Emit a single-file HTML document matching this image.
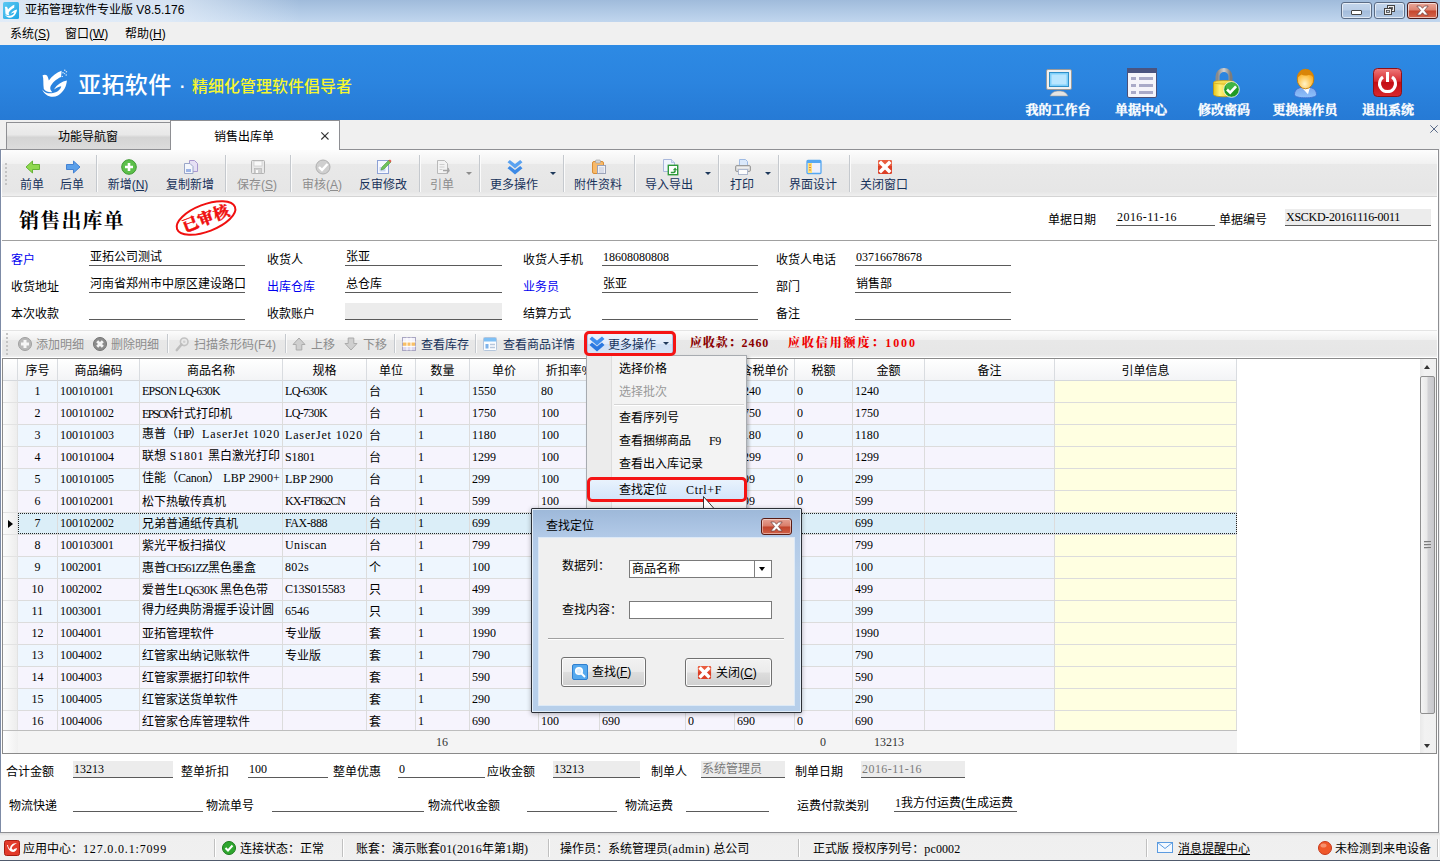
<!DOCTYPE html><html lang="zh-CN"><head><meta charset="utf-8"><title>亚拓管理软件专业版</title><style>
*{box-sizing:border-box;margin:0;padding:0}
html,body{width:1440px;height:861px;overflow:hidden;background:#f0f0f0}
body{position:relative;font:12px/14px 'Liberation Sans','Noto Sans CJK SC',sans-serif;color:#000}
.a{position:absolute;white-space:nowrap}
.m{font-family:'Liberation Serif','Noto Serif CJK SC',serif;font-size:12px}
.sf{font-family:'Liberation Serif','Noto Serif CJK SC',serif}
svg{position:absolute;overflow:visible}
#title{left:0;top:0;width:1440px;height:22px;background:linear-gradient(#a0bbdb,#b0c9e5 50%,#c1d6ee)}
#title:after{content:"";position:absolute;left:0;top:0;width:300px;height:22px;background:linear-gradient(to right,rgba(236,243,251,.75),rgba(236,243,251,.7) 55%,rgba(236,243,251,0))}
#menu{left:0;top:22px;width:1440px;height:23px;background:#f0f0f0}
#banner{left:0;top:45px;width:1440px;height:75px;background:linear-gradient(#2d8ae4,#2b84df 50%,#267ad5)}
.cap{top:2px;height:17px;width:31px;border:1px solid #5b6c85;border-radius:3px;box-shadow:inset 0 0 0 1px rgba(255,255,255,.6);background:linear-gradient(#c4d6ec 0,#b9cde6 48%,#a3bcdb 52%,#b3c9e4)}
.bl{color:#fff;font:bold 13px/14px 'Liberation Serif','Noto Serif CJK SC',serif;-webkit-text-stroke:.35px #fff;top:103px;text-align:center;transform:translateX(-50%)}
.tb{color:#17325a;top:178px;transform:translateX(-50%);text-align:center}
.tb.g{color:#8d8d8d}
.tsep{top:155px;width:2px;height:37px;border-left:1px solid #c5c9ce;border-right:1px solid #fbfbfb}
.dd{width:0;height:0;border:3px solid transparent;border-top:3px solid #333;border-bottom:0}

.fv{border-bottom:1px solid #5a5a5a;height:17px;font-size:12px;line-height:16px;padding-left:1px}
.dt{top:338px;color:#17325a;font-size:12px;line-height:14px}
.dt.g{color:#8d8d8d}
.dsep{top:334px;width:2px;height:19px;border-left:1px solid #c5c9ce;border-right:1px solid #fbfbfb}
.gh{top:359px;height:22px;line-height:25px;overflow:hidden;text-align:center;font-size:12px;background:linear-gradient(#fff,#f3f4f6);border-right:1px solid #d9dce0;border-bottom:1px solid #d5d8dc}
.c{height:22px;line-height:23px;border-right:1px solid #dcdcdc;border-bottom:1px solid #dcdcdc;padding-left:2px;overflow:hidden;font-size:12px}
.c.m{line-height:21px}
.st{top:842px;font-size:12px;line-height:14px}
.ssep{top:839px;width:2px;height:18px;border-left:1px solid #c0c0c0;border-right:1px solid #fff}
.mi{left:619px;font-size:12px;line-height:14px}
.btn{border:1px solid #707070;border-radius:3px;box-shadow:inset 0 0 0 1px #fcfcfc;background:linear-gradient(#f2f2f2 0,#ebebeb 48%,#dddddd 52%,#cfcfcf)}
</style></head><body>
<div class="a" id="title"></div>
<svg style="left:3px;top:2px" width="16" height="17" viewBox="0 0 16 17"><defs><linearGradient id="tg" x1="0" y1="0" x2="1" y2="1"><stop offset="0" stop-color="#5cc8f2"/><stop offset="1" stop-color="#1ea6e4"/></linearGradient></defs><rect x="0" y="0" width="16" height="17" rx="1.500" fill="url(#tg)"/><g transform="translate(-1.400,-1.700) scale(.5)" fill="#fff"><path d="M6.600 13.300C8 12.500 10 12.500 11 13.500C12 15 12.500 17 12.800 18.600C16 14 21 10.500 25.600 8.800L25.100 14.900C20 17 16 21 14.500 24.500C13.800 26.500 14.500 28.500 16.300 30.200C13 30.500 9.500 29.500 7.800 27C7 22 7.800 17 6.600 13.300Z"/><path d="M6.300 27.500C8.500 31 13 32 17 31C22 30 25 27 25.200 24.200C22.500 24.500 20 26 18 27.600C21 22.500 26 19.500 30.900 18.600C30.500 24 28 30 22 33.500C16 36.500 8.500 34 6.300 27.500Z"/></g></svg>
<div class="a" style="left:25px;top:2px;font:12px/16px 'Liberation Sans','Noto Sans CJK SC',sans-serif">亚拓管理软件专业版 V8.5.176</div>
<div class="a cap" style="left:1341px"></div>
<div class="a cap" style="left:1374px"></div>
<div class="a cap" style="left:1407px;border-color:#4a1a1a;background:linear-gradient(#e9a99b 0,#dc8270 48%,#c5452c 52%,#d4674f)"></div>
<div class="a" style="left:1351px;top:10px;width:11px;height:5px;border:1px solid #444;border-radius:1px;background:#fff"></div>
<svg style="left:1383px;top:4px" width="13" height="12" viewBox="0 0 13 12"><rect x="4.5" y="1.5" width="7" height="6" fill="#eee" stroke="#444"/><rect x="6.5" y="3.5" width="3" height="2" fill="#c4d4e8" stroke="#444" stroke-width=".8"/><rect x="1.5" y="4.5" width="7" height="6" fill="#eee" stroke="#444"/><rect x="3.5" y="6.5" width="3" height="2" fill="#c4d4e8" stroke="#444" stroke-width=".8"/></svg>
<svg style="left:1416px;top:5px" width="13" height="11" viewBox="0 0 13 11"><path d="M.8 1h3.700l2 2.300 2-2.300h3.700l-3.800 4.500 3.800 4.500h-3.700l-2-2.300-2 2.300h-3.700l3.800-4.500z" fill="#fff" stroke="#6a3a3a" stroke-width=".7"/></svg>
<div class="a" id="menu"></div>
<div class="a" style="left:10px;top:26px;font:12px/16px 'Liberation Sans','Noto Sans CJK SC',sans-serif">系统(<u>S</u>)</div>
<div class="a" style="left:65px;top:26px;font:12px/16px 'Liberation Sans','Noto Sans CJK SC',sans-serif">窗口(<u>W</u>)</div>
<div class="a" style="left:125px;top:26px;font:12px/16px 'Liberation Sans','Noto Sans CJK SC',sans-serif">帮助(<u>H</u>)</div>
<div class="a" id="banner"></div>
<svg style="left:36px;top:62px" width="40" height="40" viewBox="0 0 40 40"><g fill="#fff"><path d="M6.600 13.300C8 12.500 10 12.500 11 13.500C12 15 12.500 17 12.800 18.600C16 14 21 10.500 25.600 8.800L25.100 14.900C20 17 16 21 14.500 24.500C13.800 26.500 14.500 28.500 16.300 30.200C13 30.500 9.500 29.500 7.800 27C7 22 7.800 17 6.600 13.300Z"/><path d="M6.300 27.500C8.500 31 13 32 17 31C22 30 25 27 25.200 24.200C22.500 24.500 20 26 18 27.600C21 22.500 26 19.500 30.900 18.600C30.500 24 28 30 22 33.500C16 36.500 8.500 34 6.300 27.500Z"/><g opacity=".8"><circle cx="28.800" cy="8.200" r=".8"/><circle cx="30.400" cy="9.700" r=".8"/><circle cx="27" cy="10.800" r=".8"/><circle cx="28.600" cy="11.600" r=".7"/><circle cx="30.200" cy="13" r=".8"/><circle cx="26.300" cy="14.400" r=".7"/></g></g></svg>
<div class="a" style="left:78px;top:70px;color:#fff;font:500 23px/30px 'Liberation Sans','Noto Sans CJK SC',sans-serif;letter-spacing:0.4px">亚拓软件</div>
<div class="a" style="left:180px;top:75px;color:#fff;font:bold 16px/24px 'Liberation Sans','Noto Sans CJK SC',sans-serif">·</div>
<div class="a" style="left:192px;top:75px;color:#f6f62e;font:500 16px/24px 'Liberation Sans','Noto Sans CJK SC',sans-serif">精细化管理软件倡导者</div>
<svg style="left:1046px;top:69px" width="26" height="28" viewBox="0 0 26 28"><rect x=".5" y=".5" width="25" height="20" rx="1.5" fill="#f0f0f0" stroke="#9a9a9a"/><rect x="3" y="3" width="20" height="15" fill="#2f8fc8"/><rect x="4" y="4" width="18" height="13" fill="#7fd0fa"/><rect x="5.500" y="5.500" width="15" height="10" fill="#b9e6ff"/><path d="M4 27c2-4 5-5 9-5s7 1 9 5z" fill="#e4e4e4" stroke="#9a9a9a" stroke-width=".6"/></svg>
<svg style="left:1127px;top:68px" width="30" height="30" viewBox="0 0 30 30"><rect x=".5" y=".5" width="29" height="29" rx="1.5" fill="#f4f4fa" stroke="#4a5078"/><rect x="0" y="0" width="30" height="5" fill="#4a5480"/><g fill="#a9aac8"><rect x="4" y="9" width="5" height="3"/><rect x="12" y="9" width="14" height="3"/><rect x="4" y="16" width="5" height="3"/><rect x="12" y="16" width="14" height="3"/><rect x="4" y="23" width="5" height="3"/><rect x="12" y="23" width="14" height="3"/></g></svg>
<svg style="left:1213px;top:68px" width="28" height="30" viewBox="0 0 28 30"><defs><linearGradient id="lk" x1="0" x2="1"><stop offset="0" stop-color="#e8c418"/><stop offset=".3" stop-color="#fff27a"/><stop offset="1" stop-color="#e2b80e"/></linearGradient><linearGradient id="sh" x1="0" x2="1"><stop offset="0" stop-color="#8a8a8a"/><stop offset=".5" stop-color="#d2d2d2"/><stop offset="1" stop-color="#7c7c7c"/></linearGradient></defs><path d="M4.500 14V8.500a6.500 6.500 0 0 1 13 0V14" fill="none" stroke="url(#sh)" stroke-width="4"/><path d="M.5 14.500c0-2 21-2 21 0v12c0 3-21 3-21 0z" fill="url(#lk)" stroke="#c49a10" stroke-width=".8"/><ellipse cx="11" cy="14.300" rx="10.300" ry="1.800" fill="#f4dc50" stroke="#c49a10" stroke-width=".6"/><circle cx="18.500" cy="21.500" r="7.800" fill="#1f9a24" stroke="#fff" stroke-width=".8"/><ellipse cx="18.500" cy="18.500" rx="6" ry="4" fill="#58c85a" opacity=".6"/><path d="M14 21.500l3.200 3.200 5.800-6.400" fill="none" stroke="#fff" stroke-width="2.600"/></svg>
<svg style="left:1293px;top:68px" width="25" height="30" viewBox="0 0 25 30"><defs><linearGradient id="ub" x1="0" y1="0" x2="0" y2="1"><stop offset="0" stop-color="#7aa6ec"/><stop offset="1" stop-color="#8fc2fb"/></linearGradient><radialGradient id="uf" cx=".45" cy=".75" r=".7"><stop offset="0" stop-color="#fff3c8"/><stop offset=".6" stop-color="#ffc24a"/><stop offset="1" stop-color="#f0980e"/></radialGradient></defs><path d="M1.500 26.500C1.500 21 6 19 12.500 19S23.500 21 23.500 26.500C23.500 29 18 29.800 12.500 29.800S1.500 29 1.500 26.500z" fill="url(#ub)" stroke="#3f6fd0" stroke-width=".9"/><path d="M8.500 19.200l6.500 7 2-7z" fill="#fff"/><ellipse cx="12.500" cy="11" rx="8.300" ry="9.800" fill="url(#uf)" stroke="#c07a08" stroke-width=".9"/><path d="M4.300 10.500C4 4.500 8 1.200 12.500 1.200S21 4.500 20.700 10.500C20 8 17.500 6.800 15 7.200C12 7.700 10 7.500 8.500 6.500C7 7.500 5 8.800 4.300 10.500z" fill="#d98508"/></svg>
<svg style="left:1373px;top:68px" width="29" height="29" viewBox="0 0 29 29"><defs><linearGradient id="pw" x1="0" y1="0" x2="0" y2="1"><stop offset="0" stop-color="#ee7a7a"/><stop offset=".45" stop-color="#d62a30"/><stop offset=".5" stop-color="#c40d14"/><stop offset="1" stop-color="#d8282c"/></linearGradient></defs><rect x=".5" y=".5" width="28" height="28" rx="4" fill="url(#pw)" stroke="#8f1016"/><path d="M10 9a8 8 0 1 0 9 0" fill="none" stroke="#fff" stroke-width="3"/><path d="M14.500 4v10" stroke="#fff" stroke-width="3"/></svg>
<div class="a bl" style="left:1058px">我的工作台</div>
<div class="a bl" style="left:1141px">单据中心</div>
<div class="a bl" style="left:1224px">修改密码</div>
<div class="a bl" style="left:1305px">更换操作员</div>
<div class="a bl" style="left:1388px">退出系统</div>
<div class="a" style="left:6px;top:122px;width:165px;height:28px;border:1px solid #8e8f93;background:linear-gradient(#f0f0f0 0,#e8e8e8 45%,#d4d4d4 55%,#dcdcdc)"></div>
<div class="a" style="left:88px;top:130px;transform:translateX(-50%);font-size:12px">功能导航窗</div>
<svg style="left:1430px;top:125px" width="8" height="8" viewBox="0 0 8 8"><path d="M.3 .3l7.400 7.400M7.700 .3l-7.400 7.400" stroke="#5b6b88" stroke-width="1"/></svg>
<div class="a" style="left:0;top:149px;width:1439px;height:684px;border:1px solid #8e8f93;border-left-color:#7d8ba6;background:#fff"></div>
<div class="a" style="left:170px;top:120px;width:170px;height:30px;border:1px solid #8e8f93;border-bottom:0;background:#fff"></div>
<div class="a" style="left:244px;top:130px;transform:translateX(-50%);font-size:12px">销售出库单</div>
<svg style="left:321px;top:132px" width="8" height="8" viewBox="0 0 8 8"><path d="M.3 .3l7.200 7.200M7.500 .3l-7.200 7.200" stroke="#333" stroke-width="1.100"/></svg>
<div class="a" style="left:2px;top:150px;width:1435px;height:47px;background:linear-gradient(#fdfdfd 0,#f1f1f1 30%,#e9e9e9 31%,#e6e6e6 90%,#efefef);border-bottom:1px solid #d4d4d4"></div>
<div class="a" style="left:5px;top:163px;width:2px;height:2px;background:#c3c3c3"></div>
<div class="a" style="left:5px;top:167px;width:2px;height:2px;background:#c3c3c3"></div>
<div class="a" style="left:5px;top:171px;width:2px;height:2px;background:#c3c3c3"></div>
<div class="a" style="left:5px;top:175px;width:2px;height:2px;background:#c3c3c3"></div>
<div class="a" style="left:5px;top:179px;width:2px;height:2px;background:#c3c3c3"></div>
<div class="a" style="left:5px;top:183px;width:2px;height:2px;background:#c3c3c3"></div>
<svg style="left:25px;top:159px" width="16" height="16" viewBox="0 0 16 16"><path d="M1 8l6.500-6v3.500h7v5h-7v3.500z" fill="#8fd94f" stroke="#5cad2a" stroke-width=".9"/></svg>
<div class="a tb" style="left:32px">前单</div>
<svg style="left:65px;top:159px" width="16" height="16" viewBox="0 0 16 16"><path d="M15 8l-6.500-6v3.500h-7v5h7v3.500z" fill="#5ba0ea" stroke="#3a7bd0" stroke-width=".9"/></svg>
<div class="a tb" style="left:72px">后单</div>
<svg style="left:121px;top:159px" width="16" height="16" viewBox="0 0 16 16"><circle cx="8" cy="8" r="7.300" fill="#5cc04a" stroke="#3f9a32"/><path d="M8 4v8M4 8h8" stroke="#fff" stroke-width="2.600"/></svg>
<div class="a tb" style="left:128px">新增(<u>N</u>)</div>
<svg style="left:183px;top:159px" width="16" height="16" viewBox="0 0 16 16"><path d="M6.500 1.500h5l3 3v8h-8z" fill="#e6e0f4" stroke="#a898cf"/><path d="M1.500 4.500h5.500l3 3v7h-8.500z" fill="#f4f6fb" stroke="#9aa6c8"/><rect x="3" y="10" width="5" height="3" fill="#9db4e6"/></svg>
<div class="a tb" style="left:190px">复制新增</div>
<svg style="left:250px;top:159px" width="16" height="16" viewBox="0 0 16 16"><rect x="1.500" y="1.500" width="13" height="13" rx="1" fill="#e9e9e9" stroke="#b1b1b1"/><rect x="4" y="2" width="8" height="5" fill="#fafafa" stroke="#c2c2c2" stroke-width=".6"/><rect x="4.500" y="9.500" width="7" height="5" fill="#d0d0d0" stroke="#b1b1b1" stroke-width=".6"/><rect x="6" y="11" width="2" height="3" fill="#fafafa"/></svg>
<div class="a tb g" style="left:257px">保存(<u>S</u>)</div>
<svg style="left:315px;top:159px" width="16" height="16" viewBox="0 0 16 16"><circle cx="8" cy="8" r="7" fill="#cfcfcf" stroke="#b0b0b0"/><path d="M4 8l3 3 5.500-6" fill="none" stroke="#fff" stroke-width="2.400"/></svg>
<div class="a tb g" style="left:322px">审核(<u>A</u>)</div>
<svg style="left:376px;top:159px" width="16" height="16" viewBox="0 0 16 16"><rect x="1.500" y="1.500" width="11" height="13" fill="#f6f8ff" stroke="#8ea2d6"/><rect x="3.500" y="8" width="6" height="4.500" fill="#c9d5f1"/><path d="M5 11l1-3 7-7 2 2-7 7z" fill="#6fc25a" stroke="#4c9a3a" stroke-width=".6"/><path d="M12.500 1.500l1.500-1 1.500 1.500-1 1.500z" fill="#e0564a"/></svg>
<div class="a tb" style="left:383px">反审修改</div>
<svg style="left:435px;top:159px" width="16" height="16" viewBox="0 0 16 16"><path d="M2.500 1.500h7l3 3v10h-10z" fill="#f3f3f3" stroke="#b9b9b9"/><path d="M4.500 5.500h5M4.500 8h5M4.500 10.500h3" stroke="#cfcfcf"/><path d="M8 11.500h6l-1-2.500M14 11.500l-2 2.500" fill="none" stroke="#a5a5a5" stroke-width="1.300"/></svg>
<div class="a tb g" style="left:442px">引单</div>
<svg style="left:507px;top:159px" width="16" height="16" viewBox="0 0 16 16"><path d="M.5 3.200l2.300-2.300 5.200 4 5.200-4 2.300 2.300-7.500 6.300z" fill="#5aa2f0"/><path d="M.5 9.200l2.300-2.300 5.200 4 5.200-4 2.300 2.300-7.500 6.300z" fill="#3d8ae6"/></svg>
<div class="a tb" style="left:514px">更多操作</div>
<svg style="left:591px;top:159px" width="16" height="16" viewBox="0 0 16 16"><rect x="1.500" y="2.500" width="11" height="12" rx="1.500" fill="#f7b96a" stroke="#d98e38"/><rect x="4.500" y="1" width="5" height="3" rx="1" fill="#d7d7d7" stroke="#9a9a9a" stroke-width=".6"/><rect x="6.500" y="6.500" width="8" height="8" fill="#f0f2f8" stroke="#9aa2b8"/><path d="M8 9h5M8 11h5M8 13h5" stroke="#b5bcd0" stroke-width=".8"/></svg>
<div class="a tb" style="left:598px">附件资料</div>
<svg style="left:662px;top:159px" width="16" height="16" viewBox="0 0 16 16"><path d="M1.500 .5h8l3 3v9h-11z" fill="#eef3fd" stroke="#a9b8dc"/><path d="M9.500 .5v3h3" fill="#dfe7f8" stroke="#a9b8dc" stroke-width=".7"/><rect x="6.300" y="6.300" width="9.400" height="9.400" fill="#fff" stroke="#2e9a3a" stroke-width="1.400"/><path d="M8.800 13.500h2.700c1.200 0 1.600-.8 1.600-2.200" fill="none" stroke="#2e9a3a" stroke-width="1.700"/><path d="M10.800 11.300l2.300-2.800 2.200 2.800z" fill="#2e9a3a"/></svg>
<div class="a tb" style="left:669px">导入导出</div>
<svg style="left:735px;top:159px" width="16" height="16" viewBox="0 0 16 16"><path d="M4.500 .5h6l2 2v5h-8z" fill="#dbe9fb" stroke="#9fbbe4"/><rect x=".5" y="6.500" width="15" height="6" rx="1.500" fill="#d6d6d6" stroke="#9d9d9d"/><rect x="3.500" y="10.500" width="9" height="5" fill="#fcfcfc" stroke="#aeb9cf"/><rect x="2" y="8" width="12" height="1.500" fill="#efefef"/></svg>
<div class="a tb" style="left:742px">打印</div>
<svg style="left:806px;top:159px" width="16" height="16" viewBox="0 0 16 16"><rect x="1" y="1.500" width="14" height="13" rx="1" fill="#eef0fb" stroke="#56a7f0" stroke-width="1.300"/><rect x="1" y="1.500" width="14" height="2.500" fill="#56a7f0"/><rect x="2" y="4" width="4" height="10" fill="#ffe27a"/><path d="M3 6h2M3 8.500h2M3 11h2" stroke="#e0813a" stroke-width="1.200"/></svg>
<div class="a tb" style="left:813px">界面设计</div>
<svg style="left:877px;top:159px" width="16" height="16" viewBox="0 0 16 16"><rect x="1" y="1" width="14" height="14" rx="1.500" fill="#dc3f26"/><path d="M1 2.500a1.500 1.500 0 0 1 1.500-1.500h11a1.500 1.500 0 0 1 1.500 1.500v4.500h-14z" fill="#ee6a48" opacity=".7"/><path d="M4 4l8 8M12 4l-8 8" stroke="#fff" stroke-width="3.600" stroke-linecap="square"/></svg>
<div class="a tb" style="left:884px">关闭窗口</div>
<div class="a tsep" style="left:96px"></div>
<div class="a tsep" style="left:225px"></div>
<div class="a tsep" style="left:290px"></div>
<div class="a tsep" style="left:419px"></div>
<div class="a tsep" style="left:479px"></div>
<div class="a tsep" style="left:563px"></div>
<div class="a tsep" style="left:634px"></div>
<div class="a tsep" style="left:718px"></div>
<div class="a tsep" style="left:778px"></div>
<div class="a tsep" style="left:849px"></div>
<div class="a dd" style="left:466px;top:172px;border-top-color:#8d8d8d"></div>
<div class="a dd" style="left:550px;top:172px;border-top-color:#1e395b"></div>
<div class="a dd" style="left:705px;top:172px;border-top-color:#1e395b"></div>
<div class="a dd" style="left:765px;top:172px;border-top-color:#1e395b"></div>
<div class="a" style="left:19px;top:207px;font:bold 20px/28px 'Liberation Serif','Noto Serif CJK SC',serif;letter-spacing:1.2px">销售出库单</div>
<svg style="left:170px;top:196px" width="72" height="44" viewBox="0 0 72 44"><g transform="rotate(-21 36 22)"><ellipse cx="36" cy="22" rx="31" ry="13.500" fill="#fff" stroke="#f01010" stroke-width="2"/><text x="36" y="28" text-anchor="middle" font-family="'Liberation Serif','Noto Serif CJK SC',serif" font-weight="900" font-size="16" fill="#f01010" stroke="#f01010" stroke-width=".4" letter-spacing=".5">已审核</text></g></svg>
<div class="a" style="left:2px;top:240px;width:1435px;height:1px;background:#a0a0a0"></div>
<div class="a" style="left:1048px;top:213px">单据日期</div>
<div class="a fv m" style="left:1116px;top:209px;width:99px;letter-spacing:0.45px">2016-11-16</div>
<div class="a" style="left:1219px;top:213px">单据编号</div>
<div class="a fv m" style="left:1285px;top:209px;width:146px;background:#ececec;letter-spacing:-0.28px">XSCKD-20161116-0011</div>
<div class="a" style="left:11px;top:253px;color:#0000f0">客户</div>
<div class="a fv" style="left:89px;top:249px;width:156px">亚拓公司测试</div>
<div class="a" style="left:267px;top:253px">收货人</div>
<div class="a fv" style="left:345px;top:249px;width:157px">张亚</div>
<div class="a" style="left:523px;top:253px">收货人手机</div>
<div class="a fv m" style="left:602px;top:249px;width:156px">18608080808</div>
<div class="a" style="left:776px;top:253px">收货人电话</div>
<div class="a fv m" style="left:855px;top:249px;width:156px">03716678678</div>
<div class="a" style="left:11px;top:280px">收货地址</div>
<div class="a fv" style="left:89px;top:276px;width:156px">河南省郑州市中原区建设路口</div>
<div class="a" style="left:267px;top:280px;color:#0000f0">出库仓库</div>
<div class="a fv" style="left:345px;top:276px;width:157px">总仓库</div>
<div class="a" style="left:523px;top:280px;color:#0000f0">业务员</div>
<div class="a fv" style="left:602px;top:276px;width:156px">张亚</div>
<div class="a" style="left:776px;top:280px">部门</div>
<div class="a fv" style="left:855px;top:276px;width:156px">销售部</div>
<div class="a" style="left:11px;top:307px">本次收款</div>
<div class="a fv" style="left:89px;top:303px;width:156px"></div>
<div class="a" style="left:267px;top:307px">收款账户</div>
<div class="a fv" style="left:345px;top:303px;width:157px;background:#ececec"></div>
<div class="a" style="left:523px;top:307px">结算方式</div>
<div class="a fv" style="left:602px;top:303px;width:156px"></div>
<div class="a" style="left:776px;top:307px">备注</div>
<div class="a fv" style="left:855px;top:303px;width:156px"></div>
<div class="a" style="left:2px;top:330px;width:1435px;height:27px;background:linear-gradient(#fcfcfc 0,#f0f0f0 35%,#e8e8e8 36%,#e6e6e6 90%,#efefef);border-top:1px solid #e4e4e4"></div>
<div class="a" style="left:6px;top:333px;width:2px;height:2px;background:#c3c3c3"></div>
<div class="a" style="left:6px;top:337px;width:2px;height:2px;background:#c3c3c3"></div>
<div class="a" style="left:6px;top:341px;width:2px;height:2px;background:#c3c3c3"></div>
<div class="a" style="left:6px;top:345px;width:2px;height:2px;background:#c3c3c3"></div>
<div class="a" style="left:6px;top:349px;width:2px;height:2px;background:#c3c3c3"></div>
<div class="a" style="left:6px;top:353px;width:2px;height:2px;background:#c3c3c3"></div>
<svg style="left:18px;top:337px" width="14" height="14" viewBox="0 0 14 14"><circle cx="7" cy="7" r="6.500" fill="#b9b9b9" stroke="#a0a0a0"/><path d="M7 3v8M3 7h8" stroke="#f6f6f6" stroke-width="3"/></svg>
<div class="a dt g" style="left:36px">添加明细</div>
<svg style="left:93px;top:337px" width="14" height="14" viewBox="0 0 14 14"><circle cx="7" cy="7" r="6.500" fill="#8c8c8c" stroke="#747474"/><path d="M4.200 4.200l5.600 5.600M9.800 4.200l-5.600 5.600" stroke="#f4f4f4" stroke-width="2.800"/></svg>
<div class="a dt g" style="left:111px">删除明细</div>
<svg style="left:175px;top:337px" width="14" height="14" viewBox="0 0 14 14"><circle cx="9.200" cy="4.800" r="3.800" fill="#e9e9e9" stroke="#c2c2c2" stroke-width="1.600"/><circle cx="9.200" cy="4.800" r="1.300" fill="#cfcfcf"/><path d="M6.500 7.500l-4.700 5.500" stroke="#bdbdbd" stroke-width="2.600" stroke-linecap="round"/></svg>
<div class="a dt g" style="left:194px">扫描条形码(F4)</div>
<svg style="left:292px;top:337px" width="14" height="14" viewBox="0 0 14 14"><path d="M7 1l6 6.500h-3.200v5.500h-5.600v-5.500h-3.200z" fill="#cfcfcf" stroke="#ababab"/></svg>
<div class="a dt g" style="left:311px">上移</div>
<svg style="left:344px;top:337px" width="14" height="14" viewBox="0 0 14 14"><path d="M7 13l6-6.500h-3.200v-5.500h-5.600v5.500h-3.200z" fill="#cfcfcf" stroke="#ababab"/></svg>
<div class="a dt g" style="left:363px">下移</div>
<svg style="left:402px;top:337px" width="14" height="14" viewBox="0 0 14 14"><rect x=".5" y=".5" width="13" height="13" fill="#f5f3fb" stroke="#a9a6c2"/><rect x="1" y="5" width="12" height="4" fill="#f8bf66"/><rect x="1" y="9.500" width="12" height="3.500" fill="#dcd8f0"/><path d="M5 .5v13M9 .5v13M.5 5h13M.5 9.300h13" stroke="#fff" stroke-width="1"/></svg>
<div class="a dt" style="left:421px">查看库存</div>
<svg style="left:483px;top:337px" width="14" height="14" viewBox="0 0 14 14"><rect x=".5" y=".5" width="13" height="13" rx="1" fill="#fbfdff" stroke="#b4c6dc"/><rect x="1" y="1" width="12" height="3.500" fill="#7fc0f5"/><rect x="2.500" y="7" width="3" height="4.500" fill="#7fb3ea"/><path d="M7 7.500h5M7 10.500h5" stroke="#b7c7dc" stroke-width="1.300"/></svg>
<div class="a dt" style="left:503px">查看商品详情</div>
<div class="a dsep" style="left:167px"></div>
<div class="a dsep" style="left:285px"></div>
<div class="a dsep" style="left:394px"></div>
<div class="a dsep" style="left:475px"></div>
<div class="a" style="left:587px;top:333px;width:86px;height:22px;background:linear-gradient(#edf3fc 0,#e2ecfa 48%,#cfdff5 52%,#d6e4f7);border:1px solid #aac3e6"></div>
<svg style="left:589px;top:336px" width="16" height="16" viewBox="0 0 16 16"><path d="M.5 3l2.500-2.500 5 4 5-4 2.500 2.500-7.500 6.500z" fill="#3f8eec"/><path d="M.5 9l2.500-2.500 5 4 5-4 2.500 2.500-7.500 6.500z" fill="#2a78e0"/></svg>
<div class="a dt" style="left:608px">更多操作</div>
<div class="a dd" style="left:663px;top:342px;border-top-color:#1e395b"></div>
<div class="a" style="left:690px;top:337px;font:900 12px/14px 'Liberation Serif','Noto Serif CJK SC',serif;color:#8b0000;margin-top:-1px;letter-spacing:.9px">应收款：2460</div>
<div class="a" style="left:788px;top:337px;font:900 12px/14px 'Liberation Serif','Noto Serif CJK SC',serif;color:#f00000;margin-top:-1px;letter-spacing:1.9px">应收信用额度：1000</div>
<div class="a" style="left:2px;top:358px;width:1435px;height:396px;border:1px solid #8a8a8a;background:#fff"></div>
<div class="a gh" style="left:3px;width:15px"></div>
<div class="a gh" style="left:18px;width:40px">序号</div>
<div class="a gh" style="left:58px;width:82px">商品编码</div>
<div class="a gh" style="left:140px;width:143px">商品名称</div>
<div class="a gh" style="left:283px;width:84px">规格</div>
<div class="a gh" style="left:367px;width:49px">单位</div>
<div class="a gh" style="left:416px;width:54px">数量</div>
<div class="a gh" style="left:470px;width:69px">单价</div>
<div class="a gh" style="left:539px;width:61px">折扣率%</div>
<div class="a gh" style="left:600px;width:86px">折后单价</div>
<div class="a gh" style="left:686px;width:49px">税率%</div>
<div class="a gh" style="left:735px;width:60px">含税单价</div>
<div class="a gh" style="left:795px;width:58px">税额</div>
<div class="a gh" style="left:853px;width:72px">金额</div>
<div class="a gh" style="left:925px;width:130px">备注</div>
<div class="a gh" style="left:1055px;width:182px">引单信息</div>
<div class="a c" style="left:3px;top:381px;width:15px;background:linear-gradient(to right,#fcfcfc,#ededed);border-color:#e2e2e2"></div>
<div class="a c m" style="left:18px;top:381px;width:40px;background:#eef6fe;text-align:center;padding-left:0">1</div>
<div class="a c m" style="left:58px;top:381px;width:82px;background:#eef6fe">100101001</div>
<div class="a c m" style="left:140px;top:381px;width:143px;background:#eef6fe;letter-spacing:-0.74px">EPSON LQ-630K</div>
<div class="a c m" style="left:283px;top:381px;width:84px;background:#eef6fe;letter-spacing:-0.67px">LQ-630K</div>
<div class="a c" style="left:367px;top:381px;width:49px;background:#eef6fe">台</div>
<div class="a c m" style="left:416px;top:381px;width:54px;background:#eef6fe">1</div>
<div class="a c m" style="left:470px;top:381px;width:69px;background:#eef6fe">1550</div>
<div class="a c m" style="left:539px;top:381px;width:61px;background:#eef6fe">80</div>
<div class="a c m" style="left:600px;top:381px;width:86px;background:#eef6fe">1240</div>
<div class="a c m" style="left:686px;top:381px;width:49px;background:#eef6fe">0</div>
<div class="a c m" style="left:735px;top:381px;width:60px;background:#eef6fe">1240</div>
<div class="a c m" style="left:795px;top:381px;width:58px;background:#eef6fe">0</div>
<div class="a c m" style="left:853px;top:381px;width:72px;background:#eef6fe">1240</div>
<div class="a c" style="left:925px;top:381px;width:130px;background:#eef6fe"></div>
<div class="a c" style="left:1055px;top:381px;width:182px;background:#ffffe1"></div>
<div class="a c" style="left:3px;top:403px;width:15px;background:linear-gradient(to right,#fcfcfc,#ededed);border-color:#e2e2e2"></div>
<div class="a c m" style="left:18px;top:403px;width:40px;background:#f6f4fd;text-align:center;padding-left:0">2</div>
<div class="a c m" style="left:58px;top:403px;width:82px;background:#f6f4fd">100101002</div>
<div class="a c" style="left:140px;top:403px;width:143px;background:#f6f4fd"><span class="m" style="letter-spacing:-1.6px">EPSON</span>针式打印机</div>
<div class="a c m" style="left:283px;top:403px;width:84px;background:#f6f4fd;letter-spacing:-0.67px">LQ-730K</div>
<div class="a c" style="left:367px;top:403px;width:49px;background:#f6f4fd">台</div>
<div class="a c m" style="left:416px;top:403px;width:54px;background:#f6f4fd">1</div>
<div class="a c m" style="left:470px;top:403px;width:69px;background:#f6f4fd">1750</div>
<div class="a c m" style="left:539px;top:403px;width:61px;background:#f6f4fd">100</div>
<div class="a c m" style="left:600px;top:403px;width:86px;background:#f6f4fd">1750</div>
<div class="a c m" style="left:686px;top:403px;width:49px;background:#f6f4fd">0</div>
<div class="a c m" style="left:735px;top:403px;width:60px;background:#f6f4fd">1750</div>
<div class="a c m" style="left:795px;top:403px;width:58px;background:#f6f4fd">0</div>
<div class="a c m" style="left:853px;top:403px;width:72px;background:#f6f4fd">1750</div>
<div class="a c" style="left:925px;top:403px;width:130px;background:#f6f4fd"></div>
<div class="a c" style="left:1055px;top:403px;width:182px;background:#ffffe1"></div>
<div class="a c" style="left:3px;top:425px;width:15px;background:linear-gradient(to right,#fcfcfc,#ededed);border-color:#e2e2e2"></div>
<div class="a c m" style="left:18px;top:425px;width:40px;background:#eef6fe;text-align:center;padding-left:0">3</div>
<div class="a c m" style="left:58px;top:425px;width:82px;background:#eef6fe">100101003</div>
<div class="a c" style="left:140px;top:425px;width:143px;background:#eef6fe;line-height:19px">惠普（<span class="m" style="letter-spacing:-1.67px">HP</span>）<span class="m" style="letter-spacing:0.85px">LaserJet 1020</span></div>
<div class="a c m" style="left:283px;top:425px;width:84px;background:#eef6fe;letter-spacing:0.85px">LaserJet 1020</div>
<div class="a c" style="left:367px;top:425px;width:49px;background:#eef6fe">台</div>
<div class="a c m" style="left:416px;top:425px;width:54px;background:#eef6fe">1</div>
<div class="a c m" style="left:470px;top:425px;width:69px;background:#eef6fe;letter-spacing:0.11px">1180</div>
<div class="a c m" style="left:539px;top:425px;width:61px;background:#eef6fe">100</div>
<div class="a c m" style="left:600px;top:425px;width:86px;background:#eef6fe;letter-spacing:0.11px">1180</div>
<div class="a c m" style="left:686px;top:425px;width:49px;background:#eef6fe">0</div>
<div class="a c m" style="left:735px;top:425px;width:60px;background:#eef6fe;letter-spacing:0.11px">1180</div>
<div class="a c m" style="left:795px;top:425px;width:58px;background:#eef6fe">0</div>
<div class="a c m" style="left:853px;top:425px;width:72px;background:#eef6fe;letter-spacing:0.11px">1180</div>
<div class="a c" style="left:925px;top:425px;width:130px;background:#eef6fe"></div>
<div class="a c" style="left:1055px;top:425px;width:182px;background:#ffffe1"></div>
<div class="a c" style="left:3px;top:447px;width:15px;background:linear-gradient(to right,#fcfcfc,#ededed);border-color:#e2e2e2"></div>
<div class="a c m" style="left:18px;top:447px;width:40px;background:#f6f4fd;text-align:center;padding-left:0">4</div>
<div class="a c m" style="left:58px;top:447px;width:82px;background:#f6f4fd">100101004</div>
<div class="a c" style="left:140px;top:447px;width:143px;background:#f6f4fd;line-height:19px">联想<span class="m" style="letter-spacing:0.76px"> S1801 </span>黑白激光打印</div>
<div class="a c m" style="left:283px;top:447px;width:84px;background:#f6f4fd;letter-spacing:-0.13px">S1801</div>
<div class="a c" style="left:367px;top:447px;width:49px;background:#f6f4fd">台</div>
<div class="a c m" style="left:416px;top:447px;width:54px;background:#f6f4fd">1</div>
<div class="a c m" style="left:470px;top:447px;width:69px;background:#f6f4fd">1299</div>
<div class="a c m" style="left:539px;top:447px;width:61px;background:#f6f4fd">100</div>
<div class="a c m" style="left:600px;top:447px;width:86px;background:#f6f4fd">1299</div>
<div class="a c m" style="left:686px;top:447px;width:49px;background:#f6f4fd">0</div>
<div class="a c m" style="left:735px;top:447px;width:60px;background:#f6f4fd">1299</div>
<div class="a c m" style="left:795px;top:447px;width:58px;background:#f6f4fd">0</div>
<div class="a c m" style="left:853px;top:447px;width:72px;background:#f6f4fd">1299</div>
<div class="a c" style="left:925px;top:447px;width:130px;background:#f6f4fd"></div>
<div class="a c" style="left:1055px;top:447px;width:182px;background:#ffffe1"></div>
<div class="a c" style="left:3px;top:469px;width:15px;background:linear-gradient(to right,#fcfcfc,#ededed);border-color:#e2e2e2"></div>
<div class="a c m" style="left:18px;top:469px;width:40px;background:#eef6fe;text-align:center;padding-left:0">5</div>
<div class="a c m" style="left:58px;top:469px;width:82px;background:#eef6fe">100101005</div>
<div class="a c" style="left:140px;top:469px;width:143px;background:#eef6fe;line-height:19px">佳能（<span class="m" style="letter-spacing:-0.27px">Canon</span>）<span class="m" style="letter-spacing:0.17px"> LBP 2900+</span></div>
<div class="a c m" style="left:283px;top:469px;width:84px;background:#eef6fe;letter-spacing:-0.07px">LBP 2900</div>
<div class="a c" style="left:367px;top:469px;width:49px;background:#eef6fe">台</div>
<div class="a c m" style="left:416px;top:469px;width:54px;background:#eef6fe">1</div>
<div class="a c m" style="left:470px;top:469px;width:69px;background:#eef6fe">299</div>
<div class="a c m" style="left:539px;top:469px;width:61px;background:#eef6fe">100</div>
<div class="a c m" style="left:600px;top:469px;width:86px;background:#eef6fe">299</div>
<div class="a c m" style="left:686px;top:469px;width:49px;background:#eef6fe">0</div>
<div class="a c m" style="left:735px;top:469px;width:60px;background:#eef6fe">299</div>
<div class="a c m" style="left:795px;top:469px;width:58px;background:#eef6fe">0</div>
<div class="a c m" style="left:853px;top:469px;width:72px;background:#eef6fe">299</div>
<div class="a c" style="left:925px;top:469px;width:130px;background:#eef6fe"></div>
<div class="a c" style="left:1055px;top:469px;width:182px;background:#ffffe1"></div>
<div class="a c" style="left:3px;top:491px;width:15px;background:linear-gradient(to right,#fcfcfc,#ededed);border-color:#e2e2e2"></div>
<div class="a c m" style="left:18px;top:491px;width:40px;background:#f6f4fd;text-align:center;padding-left:0">6</div>
<div class="a c m" style="left:58px;top:491px;width:82px;background:#f6f4fd">100102001</div>
<div class="a c" style="left:140px;top:491px;width:143px;background:#f6f4fd">松下热敏传真机</div>
<div class="a c m" style="left:283px;top:491px;width:84px;background:#f6f4fd;letter-spacing:-1.0px">KX-FT862CN</div>
<div class="a c" style="left:367px;top:491px;width:49px;background:#f6f4fd">台</div>
<div class="a c m" style="left:416px;top:491px;width:54px;background:#f6f4fd">1</div>
<div class="a c m" style="left:470px;top:491px;width:69px;background:#f6f4fd">599</div>
<div class="a c m" style="left:539px;top:491px;width:61px;background:#f6f4fd">100</div>
<div class="a c m" style="left:600px;top:491px;width:86px;background:#f6f4fd">599</div>
<div class="a c m" style="left:686px;top:491px;width:49px;background:#f6f4fd">0</div>
<div class="a c m" style="left:735px;top:491px;width:60px;background:#f6f4fd">599</div>
<div class="a c m" style="left:795px;top:491px;width:58px;background:#f6f4fd">0</div>
<div class="a c m" style="left:853px;top:491px;width:72px;background:#f6f4fd">599</div>
<div class="a c" style="left:925px;top:491px;width:130px;background:#f6f4fd"></div>
<div class="a c" style="left:1055px;top:491px;width:182px;background:#ffffe1"></div>
<div class="a c" style="left:3px;top:513px;width:15px;background:linear-gradient(to right,#fcfcfc,#ededed);border-color:#e2e2e2"></div>
<div class="a c m" style="left:18px;top:513px;width:40px;background:#dbeef8;text-align:center;padding-left:0">7</div>
<div class="a c m" style="left:58px;top:513px;width:82px;background:#dbeef8">100102002</div>
<div class="a c" style="left:140px;top:513px;width:143px;background:#dbeef8">兄弟普通纸传真机</div>
<div class="a c m" style="left:283px;top:513px;width:84px;background:#dbeef8;letter-spacing:-0.44px">FAX-888</div>
<div class="a c" style="left:367px;top:513px;width:49px;background:#dbeef8">台</div>
<div class="a c m" style="left:416px;top:513px;width:54px;background:#dbeef8">1</div>
<div class="a c m" style="left:470px;top:513px;width:69px;background:#dbeef8">699</div>
<div class="a c m" style="left:539px;top:513px;width:61px;background:#dbeef8"></div>
<div class="a c m" style="left:600px;top:513px;width:86px;background:#dbeef8"></div>
<div class="a c m" style="left:686px;top:513px;width:49px;background:#dbeef8"></div>
<div class="a c m" style="left:735px;top:513px;width:60px;background:#dbeef8"></div>
<div class="a c m" style="left:795px;top:513px;width:58px;background:#dbeef8"></div>
<div class="a c m" style="left:853px;top:513px;width:72px;background:#dbeef8">699</div>
<div class="a c" style="left:925px;top:513px;width:130px;background:#dbeef8"></div>
<div class="a c" style="left:1055px;top:513px;width:182px;background:#dbeef8"></div>
<div class="a c" style="left:3px;top:535px;width:15px;background:linear-gradient(to right,#fcfcfc,#ededed);border-color:#e2e2e2"></div>
<div class="a c m" style="left:18px;top:535px;width:40px;background:#f6f4fd;text-align:center;padding-left:0">8</div>
<div class="a c m" style="left:58px;top:535px;width:82px;background:#f6f4fd">100103001</div>
<div class="a c" style="left:140px;top:535px;width:143px;background:#f6f4fd">紫光平板扫描仪</div>
<div class="a c m" style="left:283px;top:535px;width:84px;background:#f6f4fd;letter-spacing:0.38px">Uniscan</div>
<div class="a c" style="left:367px;top:535px;width:49px;background:#f6f4fd">台</div>
<div class="a c m" style="left:416px;top:535px;width:54px;background:#f6f4fd">1</div>
<div class="a c m" style="left:470px;top:535px;width:69px;background:#f6f4fd">799</div>
<div class="a c m" style="left:539px;top:535px;width:61px;background:#f6f4fd"></div>
<div class="a c m" style="left:600px;top:535px;width:86px;background:#f6f4fd"></div>
<div class="a c m" style="left:686px;top:535px;width:49px;background:#f6f4fd"></div>
<div class="a c m" style="left:735px;top:535px;width:60px;background:#f6f4fd"></div>
<div class="a c m" style="left:795px;top:535px;width:58px;background:#f6f4fd"></div>
<div class="a c m" style="left:853px;top:535px;width:72px;background:#f6f4fd">799</div>
<div class="a c" style="left:925px;top:535px;width:130px;background:#f6f4fd"></div>
<div class="a c" style="left:1055px;top:535px;width:182px;background:#ffffe1"></div>
<div class="a c" style="left:3px;top:557px;width:15px;background:linear-gradient(to right,#fcfcfc,#ededed);border-color:#e2e2e2"></div>
<div class="a c m" style="left:18px;top:557px;width:40px;background:#eef6fe;text-align:center;padding-left:0">9</div>
<div class="a c m" style="left:58px;top:557px;width:82px;background:#eef6fe">1002001</div>
<div class="a c" style="left:140px;top:557px;width:143px;background:#eef6fe">惠普<span class="m" style="letter-spacing:-1.05px">CH561ZZ</span>黑色墨盒</div>
<div class="a c m" style="left:283px;top:557px;width:84px;background:#eef6fe;letter-spacing:0.33px">802s</div>
<div class="a c" style="left:367px;top:557px;width:49px;background:#eef6fe">个</div>
<div class="a c m" style="left:416px;top:557px;width:54px;background:#eef6fe">1</div>
<div class="a c m" style="left:470px;top:557px;width:69px;background:#eef6fe">100</div>
<div class="a c m" style="left:539px;top:557px;width:61px;background:#eef6fe"></div>
<div class="a c m" style="left:600px;top:557px;width:86px;background:#eef6fe"></div>
<div class="a c m" style="left:686px;top:557px;width:49px;background:#eef6fe"></div>
<div class="a c m" style="left:735px;top:557px;width:60px;background:#eef6fe"></div>
<div class="a c m" style="left:795px;top:557px;width:58px;background:#eef6fe"></div>
<div class="a c m" style="left:853px;top:557px;width:72px;background:#eef6fe">100</div>
<div class="a c" style="left:925px;top:557px;width:130px;background:#eef6fe"></div>
<div class="a c" style="left:1055px;top:557px;width:182px;background:#ffffe1"></div>
<div class="a c" style="left:3px;top:579px;width:15px;background:linear-gradient(to right,#fcfcfc,#ededed);border-color:#e2e2e2"></div>
<div class="a c m" style="left:18px;top:579px;width:40px;background:#f6f4fd;text-align:center;padding-left:0">10</div>
<div class="a c m" style="left:58px;top:579px;width:82px;background:#f6f4fd">1002002</div>
<div class="a c" style="left:140px;top:579px;width:143px;background:#f6f4fd">爱普生<span class="m" style="letter-spacing:-0.52px">LQ630K </span>黑色色带</div>
<div class="a c m" style="left:283px;top:579px;width:84px;background:#f6f4fd;letter-spacing:-0.27px">C13S015583</div>
<div class="a c" style="left:367px;top:579px;width:49px;background:#f6f4fd">只</div>
<div class="a c m" style="left:416px;top:579px;width:54px;background:#f6f4fd">1</div>
<div class="a c m" style="left:470px;top:579px;width:69px;background:#f6f4fd">499</div>
<div class="a c m" style="left:539px;top:579px;width:61px;background:#f6f4fd"></div>
<div class="a c m" style="left:600px;top:579px;width:86px;background:#f6f4fd"></div>
<div class="a c m" style="left:686px;top:579px;width:49px;background:#f6f4fd"></div>
<div class="a c m" style="left:735px;top:579px;width:60px;background:#f6f4fd"></div>
<div class="a c m" style="left:795px;top:579px;width:58px;background:#f6f4fd"></div>
<div class="a c m" style="left:853px;top:579px;width:72px;background:#f6f4fd">499</div>
<div class="a c" style="left:925px;top:579px;width:130px;background:#f6f4fd"></div>
<div class="a c" style="left:1055px;top:579px;width:182px;background:#ffffe1"></div>
<div class="a c" style="left:3px;top:601px;width:15px;background:linear-gradient(to right,#fcfcfc,#ededed);border-color:#e2e2e2"></div>
<div class="a c m" style="left:18px;top:601px;width:40px;background:#eef6fe;text-align:center;padding-left:0;letter-spacing:0.22px">11</div>
<div class="a c m" style="left:58px;top:601px;width:82px;background:#eef6fe">1003001</div>
<div class="a c" style="left:140px;top:601px;width:143px;background:#eef6fe;line-height:19px">得力经典防滑握手设计圆</div>
<div class="a c m" style="left:283px;top:601px;width:84px;background:#eef6fe">6546</div>
<div class="a c" style="left:367px;top:601px;width:49px;background:#eef6fe">只</div>
<div class="a c m" style="left:416px;top:601px;width:54px;background:#eef6fe">1</div>
<div class="a c m" style="left:470px;top:601px;width:69px;background:#eef6fe">399</div>
<div class="a c m" style="left:539px;top:601px;width:61px;background:#eef6fe"></div>
<div class="a c m" style="left:600px;top:601px;width:86px;background:#eef6fe"></div>
<div class="a c m" style="left:686px;top:601px;width:49px;background:#eef6fe"></div>
<div class="a c m" style="left:735px;top:601px;width:60px;background:#eef6fe"></div>
<div class="a c m" style="left:795px;top:601px;width:58px;background:#eef6fe"></div>
<div class="a c m" style="left:853px;top:601px;width:72px;background:#eef6fe">399</div>
<div class="a c" style="left:925px;top:601px;width:130px;background:#eef6fe"></div>
<div class="a c" style="left:1055px;top:601px;width:182px;background:#ffffe1"></div>
<div class="a c" style="left:3px;top:623px;width:15px;background:linear-gradient(to right,#fcfcfc,#ededed);border-color:#e2e2e2"></div>
<div class="a c m" style="left:18px;top:623px;width:40px;background:#f6f4fd;text-align:center;padding-left:0">12</div>
<div class="a c m" style="left:58px;top:623px;width:82px;background:#f6f4fd">1004001</div>
<div class="a c" style="left:140px;top:623px;width:143px;background:#f6f4fd">亚拓管理软件</div>
<div class="a c" style="left:283px;top:623px;width:84px;background:#f6f4fd">专业版</div>
<div class="a c" style="left:367px;top:623px;width:49px;background:#f6f4fd">套</div>
<div class="a c m" style="left:416px;top:623px;width:54px;background:#f6f4fd">1</div>
<div class="a c m" style="left:470px;top:623px;width:69px;background:#f6f4fd">1990</div>
<div class="a c m" style="left:539px;top:623px;width:61px;background:#f6f4fd"></div>
<div class="a c m" style="left:600px;top:623px;width:86px;background:#f6f4fd"></div>
<div class="a c m" style="left:686px;top:623px;width:49px;background:#f6f4fd"></div>
<div class="a c m" style="left:735px;top:623px;width:60px;background:#f6f4fd"></div>
<div class="a c m" style="left:795px;top:623px;width:58px;background:#f6f4fd"></div>
<div class="a c m" style="left:853px;top:623px;width:72px;background:#f6f4fd">1990</div>
<div class="a c" style="left:925px;top:623px;width:130px;background:#f6f4fd"></div>
<div class="a c" style="left:1055px;top:623px;width:182px;background:#ffffe1"></div>
<div class="a c" style="left:3px;top:645px;width:15px;background:linear-gradient(to right,#fcfcfc,#ededed);border-color:#e2e2e2"></div>
<div class="a c m" style="left:18px;top:645px;width:40px;background:#eef6fe;text-align:center;padding-left:0">13</div>
<div class="a c m" style="left:58px;top:645px;width:82px;background:#eef6fe">1004002</div>
<div class="a c" style="left:140px;top:645px;width:143px;background:#eef6fe">红管家出纳记账软件</div>
<div class="a c" style="left:283px;top:645px;width:84px;background:#eef6fe">专业版</div>
<div class="a c" style="left:367px;top:645px;width:49px;background:#eef6fe">套</div>
<div class="a c m" style="left:416px;top:645px;width:54px;background:#eef6fe">1</div>
<div class="a c m" style="left:470px;top:645px;width:69px;background:#eef6fe">790</div>
<div class="a c m" style="left:539px;top:645px;width:61px;background:#eef6fe"></div>
<div class="a c m" style="left:600px;top:645px;width:86px;background:#eef6fe"></div>
<div class="a c m" style="left:686px;top:645px;width:49px;background:#eef6fe"></div>
<div class="a c m" style="left:735px;top:645px;width:60px;background:#eef6fe"></div>
<div class="a c m" style="left:795px;top:645px;width:58px;background:#eef6fe"></div>
<div class="a c m" style="left:853px;top:645px;width:72px;background:#eef6fe">790</div>
<div class="a c" style="left:925px;top:645px;width:130px;background:#eef6fe"></div>
<div class="a c" style="left:1055px;top:645px;width:182px;background:#ffffe1"></div>
<div class="a c" style="left:3px;top:667px;width:15px;background:linear-gradient(to right,#fcfcfc,#ededed);border-color:#e2e2e2"></div>
<div class="a c m" style="left:18px;top:667px;width:40px;background:#f6f4fd;text-align:center;padding-left:0">14</div>
<div class="a c m" style="left:58px;top:667px;width:82px;background:#f6f4fd">1004003</div>
<div class="a c" style="left:140px;top:667px;width:143px;background:#f6f4fd">红管家票据打印软件</div>
<div class="a c m" style="left:283px;top:667px;width:84px;background:#f6f4fd"></div>
<div class="a c" style="left:367px;top:667px;width:49px;background:#f6f4fd">套</div>
<div class="a c m" style="left:416px;top:667px;width:54px;background:#f6f4fd">1</div>
<div class="a c m" style="left:470px;top:667px;width:69px;background:#f6f4fd">590</div>
<div class="a c m" style="left:539px;top:667px;width:61px;background:#f6f4fd"></div>
<div class="a c m" style="left:600px;top:667px;width:86px;background:#f6f4fd"></div>
<div class="a c m" style="left:686px;top:667px;width:49px;background:#f6f4fd"></div>
<div class="a c m" style="left:735px;top:667px;width:60px;background:#f6f4fd"></div>
<div class="a c m" style="left:795px;top:667px;width:58px;background:#f6f4fd"></div>
<div class="a c m" style="left:853px;top:667px;width:72px;background:#f6f4fd">590</div>
<div class="a c" style="left:925px;top:667px;width:130px;background:#f6f4fd"></div>
<div class="a c" style="left:1055px;top:667px;width:182px;background:#ffffe1"></div>
<div class="a c" style="left:3px;top:689px;width:15px;background:linear-gradient(to right,#fcfcfc,#ededed);border-color:#e2e2e2"></div>
<div class="a c m" style="left:18px;top:689px;width:40px;background:#eef6fe;text-align:center;padding-left:0">15</div>
<div class="a c m" style="left:58px;top:689px;width:82px;background:#eef6fe">1004005</div>
<div class="a c" style="left:140px;top:689px;width:143px;background:#eef6fe">红管家送货单软件</div>
<div class="a c m" style="left:283px;top:689px;width:84px;background:#eef6fe"></div>
<div class="a c" style="left:367px;top:689px;width:49px;background:#eef6fe">套</div>
<div class="a c m" style="left:416px;top:689px;width:54px;background:#eef6fe">1</div>
<div class="a c m" style="left:470px;top:689px;width:69px;background:#eef6fe">290</div>
<div class="a c m" style="left:539px;top:689px;width:61px;background:#eef6fe"></div>
<div class="a c m" style="left:600px;top:689px;width:86px;background:#eef6fe"></div>
<div class="a c m" style="left:686px;top:689px;width:49px;background:#eef6fe"></div>
<div class="a c m" style="left:735px;top:689px;width:60px;background:#eef6fe"></div>
<div class="a c m" style="left:795px;top:689px;width:58px;background:#eef6fe"></div>
<div class="a c m" style="left:853px;top:689px;width:72px;background:#eef6fe">290</div>
<div class="a c" style="left:925px;top:689px;width:130px;background:#eef6fe"></div>
<div class="a c" style="left:1055px;top:689px;width:182px;background:#ffffe1"></div>
<div class="a c" style="left:3px;top:711px;width:15px;background:linear-gradient(to right,#fcfcfc,#ededed);border-color:#e2e2e2"></div>
<div class="a c m" style="left:18px;top:711px;width:40px;background:#f6f4fd;text-align:center;padding-left:0">16</div>
<div class="a c m" style="left:58px;top:711px;width:82px;background:#f6f4fd">1004006</div>
<div class="a c" style="left:140px;top:711px;width:143px;background:#f6f4fd">红管家仓库管理软件</div>
<div class="a c m" style="left:283px;top:711px;width:84px;background:#f6f4fd"></div>
<div class="a c" style="left:367px;top:711px;width:49px;background:#f6f4fd">套</div>
<div class="a c m" style="left:416px;top:711px;width:54px;background:#f6f4fd">1</div>
<div class="a c m" style="left:470px;top:711px;width:69px;background:#f6f4fd">690</div>
<div class="a c m" style="left:539px;top:711px;width:61px;background:#f6f4fd">100</div>
<div class="a c m" style="left:600px;top:711px;width:86px;background:#f6f4fd">690</div>
<div class="a c m" style="left:686px;top:711px;width:49px;background:#f6f4fd">0</div>
<div class="a c m" style="left:735px;top:711px;width:60px;background:#f6f4fd">690</div>
<div class="a c m" style="left:795px;top:711px;width:58px;background:#f6f4fd">0</div>
<div class="a c m" style="left:853px;top:711px;width:72px;background:#f6f4fd">690</div>
<div class="a c" style="left:925px;top:711px;width:130px;background:#f6f4fd"></div>
<div class="a c" style="left:1055px;top:711px;width:182px;background:#ffffe1"></div>
<div class="a" style="left:18px;top:513px;width:1219px;height:21px;border:1px dotted #222"></div>
<div class="a" style="left:8px;top:520px;width:0;height:0;border:4px solid transparent;border-left:5px solid #000;border-right:0"></div>
<div class="a" style="left:3px;top:730px;width:1234px;height:23px;background:#f4f4f4;border-top:1px solid #bdbdbd"></div>
<div class="a" style="left:3px;top:731px;width:15px;height:22px;background:linear-gradient(to right,#fff,#f0f0f0)"></div>
<div class="a m" style="left:436px;top:735px;color:#333">16</div>
<div class="a m" style="left:820px;top:735px;color:#333">0</div>
<div class="a m" style="left:874px;top:735px;color:#333">13213</div>
<div class="a" style="left:1420px;top:359px;width:16px;height:394px;background:linear-gradient(to right,#e9e9e9,#f2f2f2 30%,#f0f0f0)"></div>
<div class="a" style="left:1420px;top:376px;width:15px;height:338px;border:1px solid #8f8f8f;border-radius:2px;background:linear-gradient(to right,#f4f4f4 0,#e9e9e9 45%,#d2d2d5 55%,#c8c8cc)"></div>
<div class="a" style="left:1424px;top:541px;width:7px;height:2px;background:linear-gradient(#555,#f4f4f4)"></div>
<div class="a" style="left:1424px;top:544px;width:7px;height:2px;background:linear-gradient(#555,#f4f4f4)"></div>
<div class="a" style="left:1424px;top:547px;width:7px;height:2px;background:linear-gradient(#555,#f4f4f4)"></div>
<div class="a" style="left:1424px;top:365px;width:0;height:0;border:3.500px solid transparent;border-bottom:4px solid #333;border-top:0"></div>
<div class="a" style="left:1424px;top:744px;width:0;height:0;border:3.500px solid transparent;border-top:4px solid #333;border-bottom:0"></div>
<div class="a" style="left:6px;top:765px">合计金额</div>
<div class="a fv m" style="left:73px;top:761px;width:100px;background:#ececec">13213</div>
<div class="a" style="left:181px;top:765px">整单折扣</div>
<div class="a fv m" style="left:248px;top:761px;width:80px">100</div>
<div class="a" style="left:333px;top:765px">整单优惠</div>
<div class="a fv m" style="left:398px;top:761px;width:87px">0</div>
<div class="a" style="left:487px;top:765px">应收金额</div>
<div class="a fv m" style="left:553px;top:761px;width:87px;background:#ececec">13213</div>
<div class="a" style="left:651px;top:765px">制单人</div>
<div class="a fv" style="left:701px;top:761px;width:84px;background:#ececec;color:#7a7a7a">系统管理员</div>
<div class="a" style="left:795px;top:765px">制单日期</div>
<div class="a fv m" style="left:861px;top:761px;width:104px;background:#ececec;color:#7a7a7a;letter-spacing:0.45px">2016-11-16</div>
<div class="a" style="left:9px;top:799px">物流快递</div>
<div class="a fv m" style="left:73px;top:795px;width:130px"></div>
<div class="a" style="left:206px;top:799px">物流单号</div>
<div class="a fv m" style="left:272px;top:795px;width:152px"></div>
<div class="a" style="left:428px;top:799px">物流代收金额</div>
<div class="a fv m" style="left:527px;top:795px;width:90px"></div>
<div class="a" style="left:625px;top:799px">物流运费</div>
<div class="a fv m" style="left:686px;top:795px;width:83px"></div>
<div class="a" style="left:797px;top:799px">运费付款类别</div>
<div class="a fv" style="left:894px;top:795px;width:123px"><span class="m">1</span>我方付运费(生成运费</div>
<div class="a" style="left:0;top:833px;width:1440px;height:28px;background:linear-gradient(#dcdcdc 0,#efefef 3px,#f0f0f0 100%);border-bottom:1px solid #505a6c"></div>
<svg style="left:4px;top:840px" width="16" height="16" viewBox="0 0 16 16"><rect x=".5" y=".5" width="15" height="15" rx="2" fill="#e23a2a" stroke="#a81c10"/><path d="M3 5c1 4 3 7 6 7 2 0 4-2 4-4l-3 1c0 1-1 1-2 0 -1-2 2-4 5-6 -5 0-7 3-7 6 -1-1-2-2-2-4z" fill="#fff"/></svg>
<div class="a st" style="left:23px">应用中心：<span class="m" style="letter-spacing:0.83px">127.0.0.1:7099</span></div>
<svg style="left:222px;top:841px" width="14" height="14" viewBox="0 0 14 14"><circle cx="7" cy="7" r="6.500" fill="#2ea62e" stroke="#1a7a1a"/><path d="M3.500 7l2.500 2.500 4.500-5" fill="none" stroke="#fff" stroke-width="2"/></svg>
<div class="a st" style="left:240px">连接状态：正常</div>
<div class="a st" style="left:356px">账套：演示账套<span class="m" style="letter-spacing:0.29px">01(2016</span>年第<span class="m">1</span>期<span class="m" style="letter-spacing:2.0px">)</span></div>
<div class="a st" style="left:560px">操作员：系统管理员<span class="m" style="letter-spacing:0.57px">(admin)</span> 总公司</div>
<div class="a st" style="left:813px">正式版 授权序列号：<span class="m" style="letter-spacing:0.11px">pc0002</span></div>
<svg style="left:1157px;top:842px" width="16" height="12" viewBox="0 0 16 12"><rect x=".5" y=".5" width="15" height="10" fill="#f4f9ff" stroke="#5b9be0"/><path d="M.5 .5l7.500 6 7.500-6" fill="none" stroke="#5b9be0"/></svg>
<div class="a st" style="left:1178px;text-decoration:underline">消息提醒中心</div>
<svg style="left:1318px;top:841px" width="14" height="14" viewBox="0 0 14 14"><circle cx="7" cy="7" r="6.500" fill="#f0582a" stroke="#c8381a"/><ellipse cx="5.500" cy="4.500" rx="3" ry="2" fill="#f9a080" opacity=".8"/></svg>
<div class="a st" style="left:1335px">未检测到来电设备</div>
<div class="a ssep" style="left:214px"></div>
<div class="a ssep" style="left:342px"></div>
<div class="a ssep" style="left:548px"></div>
<div class="a ssep" style="left:798px"></div>
<div class="a ssep" style="left:1146px"></div>
<div class="a ssep" style="left:1437px"></div>
<div class="a" style="left:586px;top:355px;width:161px;height:156px;background:#f3f3f3;border:1px solid #a7abb0;box-shadow:2px 2px 3px rgba(0,0,0,.25)"></div>
<div class="a" style="left:587px;top:356px;width:25px;height:154px;background:#ececec;border-right:1px solid #dcdcdc"></div>
<div class="a mi" style="top:362px">选择价格</div>
<div class="a mi" style="top:385px;color:#9a9a9a">选择批次</div>
<div class="a mi" style="top:411px">查看序列号</div>
<div class="a mi" style="top:434px">查看捆绑商品</div>
<div class="a mi" style="top:457px">查看出入库记录</div>
<div class="a m" style="left:709px;top:434px;letter-spacing:-0.34px">F9</div>
<div class="a" style="left:614px;top:404px;width:130px;height:2px;border-top:1px solid #d5d5d5;border-bottom:1px solid #fff"></div>
<div class="a" style="left:614px;top:478px;width:130px;height:2px;border-top:1px solid #d5d5d5;border-bottom:1px solid #fff"></div>
<div class="a" style="left:588px;top:478px;width:158px;height:22px;background:linear-gradient(#eaf3fd,#d3e5fa);border:1px solid #a8c8ee;border-radius:2px"></div>
<div class="a mi" style="top:483px">查找定位</div>
<div class="a m" style="left:686px;top:483px;letter-spacing:0.65px">Ctrl+F</div>
<div class="a" style="left:584px;top:331px;width:92px;height:25px;border:3px solid #f51414;border-radius:5px"></div>
<div class="a" style="left:587px;top:477px;width:160px;height:25px;border:3px solid #f51414;border-radius:5px"></div>
<svg style="left:703px;top:496px" width="13" height="20" viewBox="0 0 13 20"><path d="M.5 .5v16l3.500-3.500 2.500 6 2-1-2.500-5.500h5z" fill="#fff" stroke="#222" stroke-width=".9"/></svg>
<div class="a" style="left:531px;top:508px;width:271px;height:205px;border:1px solid #2b2f36;border-radius:1px;background:linear-gradient(#9db8d9 0,#b1c9e7 26px,#b9d0ea 60px,#b7cfea 100%);box-shadow:inset 0 0 0 1px rgba(235,243,252,.85),0 1px 5px rgba(0,0,0,.3)"></div>
<div class="a" style="left:539px;top:538px;width:255px;height:167px;background:#f0f0f0;box-shadow:0 0 0 1px rgba(225,236,248,.9)"></div>
<div class="a" style="left:546px;top:518px;font:12px/16px 'Liberation Sans','Noto Sans CJK SC',sans-serif">查找定位</div>
<div class="a" style="left:761px;top:518px;width:31px;height:17px;border:1px solid #5a1c14;border-radius:3px;box-shadow:inset 0 0 0 1px rgba(255,255,255,.45);background:linear-gradient(#e5a193 0,#d97c69 48%,#c1432b 52%,#cf6048)"></div>
<svg style="left:770px;top:521px" width="13" height="11" viewBox="0 0 13 11"><path d="M.8 1h3.700l2 2.300 2-2.300h3.700l-3.800 4.500 3.800 4.500h-3.700l-2-2.300-2 2.300h-3.700l3.800-4.500z" fill="#fff" stroke="#6a3a3a" stroke-width=".7"/></svg>
<div class="a" style="left:562px;top:559px">数据列：</div>
<div class="a" style="left:629px;top:560px;width:143px;height:18px;background:#fff;border:1px solid #7a7a7a"></div>
<div class="a" style="left:632px;top:562px">商品名称</div>
<div class="a" style="left:754px;top:561px;width:17px;height:16px;border-left:1px solid #808080;background:#fff"></div>
<div class="a dd" style="left:759px;top:567px;border-width:4px 3.500px 0 3.500px;border-top-color:#000"></div>
<div class="a" style="left:562px;top:603px">查找内容：</div>
<div class="a" style="left:629px;top:601px;width:143px;height:18px;background:#fff;border:1px solid #7a7a7a"></div>
<div class="a" style="left:548px;top:638px;width:236px;height:2px;border-top:1px solid #a0a0a0;border-bottom:1px solid #fff"></div>
<div class="a btn" style="left:561px;top:657px;width:85px;height:30px"></div>
<svg style="left:572px;top:664px" width="16" height="16" viewBox="0 0 16 16"><rect x=".5" y=".5" width="15" height="15" rx="1.500" fill="#56a9ee" stroke="#2f7fcf"/><circle cx="7" cy="7" r="3.300" fill="#dff0ff" stroke="#fff" stroke-width="1.500"/><path d="M9.500 9.500l3.500 3.500" stroke="#fff" stroke-width="2"/></svg>
<div class="a" style="left:592px;top:665px">查找(<u>F</u>)</div>
<div class="a btn" style="left:685px;top:658px;width:87px;height:29px"></div>
<svg style="left:697px;top:665px" width="15" height="15" viewBox="0 0 16 16"><rect x="1" y="1" width="14" height="14" rx="1.500" fill="#dc3f26"/><path d="M1 2.500a1.500 1.500 0 0 1 1.500-1.500h11a1.500 1.500 0 0 1 1.500 1.500v4.500h-14z" fill="#ee6a48" opacity=".7"/><path d="M4 4l8 8M12 4l-8 8" stroke="#fff" stroke-width="3.600" stroke-linecap="square"/></svg>
<div class="a" style="left:716px;top:666px">关闭(<u>C</u>)</div>
</body></html>
